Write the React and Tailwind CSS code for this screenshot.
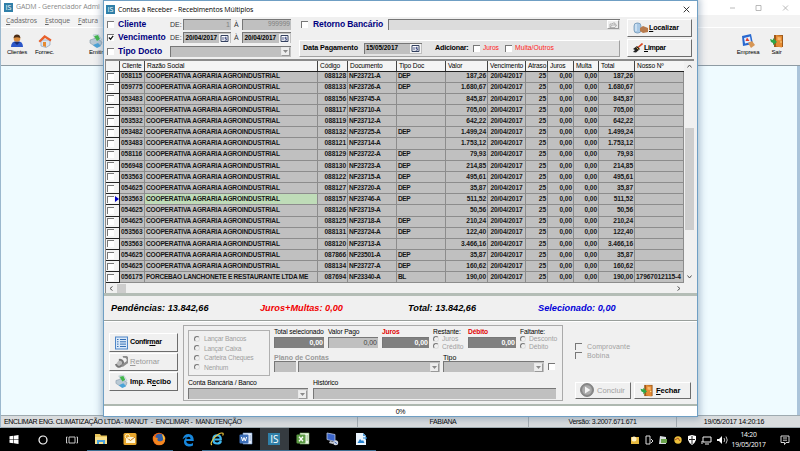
import React from "react";

const rows = [
  ["058115", "088128", "NF23721-A", "DEP", "187,26"],
  ["059775", "088133", "NF23726-A", "DEP", "1.680,67"],
  ["053483", "088156", "NF23745-A", "", "845,87"],
  ["053531", "088117", "NF23710-A", "", "705,00"],
  ["053532", "088119", "NF23712-A", "", "642,22"],
  ["053482", "088132", "NF23725-A", "DEP", "1.499,24"],
  ["053483", "088121", "NF23714-A", "", "1.753,12"],
  ["058116", "088129", "NF23722-A", "DEP", "79,93"],
  ["056948", "088130", "NF23723-A", "DEP", "214,85"],
  ["053563", "088122", "NF23715-A", "DEP", "495,61"],
  ["054625", "088127", "NF23720-A", "DEP", "35,87"],
  ["053563", "088157", "NF23746-A", "DEP", "511,52"],
  ["054625", "088126", "NF23719-A", "", "50,56"],
  ["054625", "088125", "NF23718-A", "DEP", "210,24"],
  ["053563", "088131", "NF23724-A", "DEP", "122,40"],
  ["053563", "088120", "NF23713-A", "", "3.466,16"],
  ["054625", "087866", "NF23501-A", "DEP", "35,87"],
  ["054625", "088134", "NF23727-A", "DEP", "160,62"],
  ["056175", "087694", "NF23340-A", "BL", "190,00"],
];

const COLS =
  "grid grid-cols-[14px_25px_173px_30px_49px_49px_42px_38px_22px_26px_25px_36px_49px]";

const Check = ({ on, className = "" }) => (
  <span className={`block h-[7px] w-[7px] shrink-0 border-l border-t border-[#777] ${className || "bg-white"}`}>
    {on && (
      <svg viewBox="0 0 7 7" className="block h-[6px] w-[6px]">
        <path d="M1 3 L3 5 L6 1" fill="none" stroke="#111" strokeWidth="1.5" />
      </svg>
    )}
  </span>
);

const Radio = () => (
  <span className="block h-[6px] w-[6px] shrink-0 rounded-full border border-[#e0e0e0] border-l-[#777] border-t-[#777] bg-[#f0f0f0]" />
);

const Field = ({ className = "", children }) => (
  <span
    className={`flex h-[11px] shrink-0 items-center justify-end border-l border-t border-[#777] pr-[1px] ${className}`}
  >
    {children}
  </span>
);

const Arrow = () => (
  <span className="flex h-[9px] w-[9px] items-center justify-center border border-[#e8e8e8] border-b-[#999] border-r-[#999] bg-[#ededed]">
    <svg viewBox="0 0 5 3" className="h-[3px] w-[5px]">
      <path d="M0 0H5L2.5 3Z" fill="#8a8a8a" />
    </svg>
  </span>
);

const Calendar = () => (
  <svg viewBox="0 0 11 9" className="h-[9px] w-[11px] shrink-0">
    <rect width="11" height="9" fill="#f4f4f4" />
    <path d="M2 1.5H9V7.5H2Z" fill="#fff" stroke="#33405f" />
    <path d="M4 3V6.3M7.6 3.3H6V4.6H7.4V6.2H5.6" fill="none" stroke="#1d2c6b" strokeWidth=".8" />
  </svg>
);

const Btn = ({ className = "", children }) => (
  <div
    className={`flex shrink-0 items-center whitespace-nowrap border border-b-[#6c6c6c] border-l-white border-r-[#6c6c6c] border-t-white bg-[#f0f0f0] text-[7.6px] font-bold ${className}`}
  >
    {children}
  </div>
);

const ISLogo = ({ className = "" }) => (
  <span
    className={`flex shrink-0 items-center justify-center bg-[#2f7fa8] font-['Open_Sans',sans-serif] leading-none text-white ${className}`}
  >
    IS
  </span>
);

const DoorIcon = ({ className = "" }) => (
  <svg viewBox="0 0 14 14" className={`shrink-0 ${className}`}>
    <path d="M4 1H13V13H4Z" fill="#9c5a1c" />
    <path d="M6 1L12 2V13.5L6 12.5Z" fill="#e58a32" />
    <path d="M7.5 3L10.8 3.6V6.5L7.5 6Z" fill="#f7b86c" />
    <circle cx="11" cy="8" r=".7" fill="#ffe9a0" />
    <path d="M0 5L3 6L3 4L7 8L3 11V9L1 8Z" fill="#2fa546" />
  </svg>
);

const PrintIcon = ({ className = "" }) => (
  <svg viewBox="0 0 14 14" className={`shrink-0 ${className}`}>
    <path d="M4 1L9 0L13 6L8 8Z" fill="#dfe9ee" stroke="#9fb4c0" strokeWidth=".5" />
    <path d="M1 6L7 4L13 8L12 11L7 13L1 9Z" fill="#b9c9d4" stroke="#71889a" strokeWidth=".5" />
    <path d="M5 2L9 1L11 5L8 7Z" fill="#42b649" />
    <path d="M4 11L9 9L12 12L8 14Z" fill="#4aa3d8" />
  </svg>
);

const Pointer = () => (
  <svg viewBox="0 0 4 6" className="h-[6px] w-[4px]">
    <path d="M0 0L4 3L0 6Z" fill="#0000c8" />
  </svg>
);

function MainWindow() {
  const tool = "flex flex-col items-center text-[6px] leading-[8px] text-black tracking-[-0.2px]";
  return (
    <div className="flex h-[428px] w-[800px] flex-col border-l border-[#9bb8ce] bg-[#f0f0f0]">
      <div className="flex h-[15px] shrink-0 items-center bg-white pl-[3px] font-['Open_Sans',sans-serif] text-[7px] text-[#888]">
        <ISLogo className="mr-[3px] h-[9px] w-[9px] text-[7px]" />
        <span className="w-[87px] shrink-0 overflow-hidden whitespace-nowrap tracking-[-0.1px]">GADM - Gerenciador Admi</span>
        <svg viewBox="0 0 60 8" className="ml-[626px] h-[8px] w-[60px] shrink-0">
          <path d="M1 4H6M27 1.5H32V6.5H27ZM54 1.5L59 6.5M59 1.5L54 6.5" fill="none" stroke="#a8a8a8" strokeWidth=".8" />
        </svg>
      </div>
      <div className="flex h-[13px] shrink-0 items-center border-b border-white bg-[#f3f3f3] pl-[5px] font-['Open_Sans',sans-serif] text-[6.9px] tracking-[-0.15px] text-[#666]">
        <span className="w-[39px]"><u>C</u>adastros</span>
        <span className="w-[33px]"><u>E</u>stoque</span>
        <span className="w-[25px] overflow-hidden"><u>F</u>atura</span>
      </div>
      <div className="flex h-[38px] shrink-0 items-start border-b border-[#8e9ba3] pt-[6px]">
        <div className={`${tool} ml-[2px] w-[28px]`}>
          <svg viewBox="0 0 14 14" className="h-[14px] w-[14px]">
            <path d="M1 13Q1 7 7 7Q13 7 13 13Z" fill="#2b56c8" />
            <path d="M4 8L7 11L10 8Z" fill="#1c2e70" />
            <circle cx="7" cy="4.5" r="3.3" fill="#d98c3f" />
            <path d="M3.6 4Q4 .6 7 .6Q10 .6 10.4 4Q7 2.6 3.6 4Z" fill="#4b2c16" />
          </svg>
          Clientes
        </div>
        <div className={`${tool} w-[27px]`}>
          <svg viewBox="0 0 14 14" className="h-[14px] w-[14px]">
            <path d="M3 6V12L8 13.5L12 11V6Z" fill="#dbe6f2" stroke="#7f95ae" strokeWidth=".6" />
            <path d="M.5 7L6.5 1L13.5 5.5L12.5 7.5L7 4L2 8.5Z" fill="#e8602b" />
            <path d="M5 8H8V13L5 12Z" fill="#e58a32" />
          </svg>
          Fornec.
        </div>
        <div className={`${tool} ml-[24px] w-[28px]`}>
          <PrintIcon className="h-[14px] w-[14px]" />
          Emitir
        </div>
        <div className={`${tool} ml-[623px] w-[30px]`}>
          <svg viewBox="0 0 14 14" className="h-[14px] w-[14px]">
            <path d="M1 2L10 0L12 10L2 12Z" fill="#2868d0" />
            <path d="M3 4L9 2.5L10 8L4 9.5Z" fill="#e5eefc" />
            <path d="M6 3.5L8.5 7H4.5Z" fill="#e03a28" />
            <path d="M7 9L11 7L14 11L10 14Z" fill="#d79655" />
          </svg>
          Empresa
        </div>
        <div className={`${tool} w-[27px]`}>
          <DoorIcon className="h-[14px] w-[14px]" />
          Sair
        </div>
      </div>
      <div className="flex-1 border-r-[3px] border-[#abc4da] bg-[#effbff]" />
      <div className="flex h-[13px] shrink-0 items-center whitespace-nowrap border-y border-[#9eaab0] bg-[#d9dcde] text-[7px] text-black">
        <span className="w-[357px] border-r border-[#a6adb2] pl-[3px] leading-[10px] tracking-[-0.38px]">
          ENCLIMAR ENG. CLIMATIZAÇÃO LTDA - MANUT&nbsp; -&nbsp; ENCLIMAR -&nbsp; MANUTENÇÃO
        </span>
        <span className="w-[171px] border-r border-[#a6adb2] text-center leading-[10px] tracking-[-0.4px]">FABIANA</span>
        <span className="w-[148px] border-r border-[#a6adb2] text-center leading-[10px] tracking-[-0.28px]">Versão: 3.2007.671.671</span>
        <span className="w-[114px] text-center leading-[10px] tracking-[-0.2px]">19/05/2017 14:20:16</span>
      </div>
    </div>
  );
}

function Filters() {
  const label = "whitespace-nowrap text-[8.5px] font-bold text-[#000080]";
  return (
    <div className="flex h-[42px] shrink-0 pt-[1.5px] text-[7px] leading-none">
      <div className="flex w-[195px] flex-col gap-[2.5px] pl-[3px]">
        <div className="flex h-[11px] items-center">
          <Check />
          <span className={`${label} ml-[4px] w-[52px]`}>Cliente</span>
          <span className="w-[13px] text-[#333]">DE:</span>
          <Field className="w-[48px] bg-[#c0c0c0] text-[#808080]">1</Field>
          <span className="ml-[3px] w-[8px] text-[#333]">À</span>
          <Field className="w-[49px] bg-[#c0c0c0] text-[6.6px] text-[#808080]">999999</Field>
        </div>
        <div className="flex h-[11px] items-center">
          <Check on />
          <span className={`${label} ml-[4px] w-[52px]`}>Vencimento</span>
          <span className="w-[13px] text-[#333]">DE:</span>
          <Field className="w-[48px] bg-[#c0c0c0] text-[6.4px] font-bold">
            <span className="mr-[2px] tracking-[-0.05px]">20/04/2017</span><Calendar />
          </Field>
          <span className="ml-[3px] w-[8px] text-[#333]">À</span>
          <Field className="w-[49px] bg-[#c0c0c0] text-[6.4px] font-bold">
            <span className="mr-[3px] tracking-[-0.05px]">20/04/2017</span><Calendar />
          </Field>
        </div>
        <div className="flex h-[11px] items-center">
          <Check />
          <span className={`${label} ml-[4px] w-[52px]`}>Tipo Docto</span>
          <Field className="w-[121px] bg-[#c0c0c0]"><Arrow /></Field>
        </div>
      </div>
      <div className="flex w-[321px] flex-col">
        <div className="flex h-[11px] items-center pl-[2px]">
          <Check />
          <span className={`${label} ml-[5px] w-[75px] tracking-[-0.08px]`}>Retorno Bancário</span>
          <Field className="w-[232px] bg-[#dcdcdc]">
            <span className="flex h-[9px] w-[12px] items-center justify-center border border-b-[#999] border-l-white border-r-[#999] border-t-white bg-[#eee]">
              <svg viewBox="0 0 8 6" className="h-[6px] w-[8px]">
                <path d="M1 5.5V2H3L4 1H6V3M1 5.5L3 3H7.6L6 5.5Z" fill="none" stroke="#999" strokeWidth=".7" />
              </svg>
            </span>
          </Field>
        </div>
        <div className="mt-[10px] flex h-[17px] items-center whitespace-nowrap border border-b-[#a0a0a0] border-l-white border-r-[#a0a0a0] border-t-white bg-[#e4e4e4] pl-[3px]">
          <span className="w-[61px] text-[7.2px] font-bold tracking-[-0.1px]">Data Pagamento</span>
          <Field className="w-[58px] bg-[#c0c0c0] text-[6.4px] font-bold">
            <span className="mr-[12px]">15/05/2017</span><Calendar />
          </Field>
          <span className="ml-[13px] w-[38px] text-[7.2px] font-bold tracking-[-0.2px]">Adicionar:</span>
          <Check />
          <span className="ml-[3px] w-[22px] text-[6.7px] tracking-[-0.1px] text-[#f22]">Juros</span>
          <Check />
          <span className="ml-[3px] text-[6.8px] text-[#f22]">Multa/Outros</span>
        </div>
      </div>
      <div className="flex flex-col gap-[2px] pl-[7px]">
        <Btn className="h-[18px] w-[65px]">
          <svg viewBox="0 0 15 12" className="ml-[5px] mr-[1px] h-[12px] w-[15px]">
            <rect x="1" y="1" width="7" height="10" rx="3" fill="#a8c8e4" stroke="#6a8fb0" strokeWidth=".7" />
            <path d="M3 2V9" stroke="#edf6ff" />
            <path d="M7 6L10 4L15 6V10L10 11L7 9Z" fill="#b77a4c" />
          </svg>
          <span className="text-[7.2px] tracking-[-0.15px]"><u>L</u>ocalizar</span>
        </Btn>
        <Btn className="h-[18px] w-[65px]">
          <svg viewBox="0 0 10 10" className="ml-[5px] mr-[1px] h-[10px] w-[10px]">
            <path d="M9.5 .5L5 4.5" stroke="#d8441f" strokeWidth="1.6" />
            <path d="M4 3L7 6L3 9.5L0 9L2 7L0 6Z" fill="#222" />
            <path d="M3.5 4.5L5.5 6.5" stroke="#efb43c" />
          </svg>
          <span className="text-[7.2px] tracking-[-0.4px]"><u>L</u>impar</span>
        </Btn>
      </div>
    </div>
  );
}

function Grid() {
  const head = "overflow-hidden whitespace-nowrap border-r border-[#444] pl-[2px]";
  const cell = "flex items-center overflow-hidden whitespace-nowrap border-b border-r border-[#8c8c8c] px-[1px]";
  return (
    <div className="ml-[1px] flex h-[234px] w-[589px] shrink-0 flex-col border-l border-t-2 border-[#8a8a8a] bg-[#f0f0f0]">
      <div className="flex h-[222px]">
        <div className="w-[578px] overflow-hidden">
          <div className={`${COLS} h-[10.5px] border-b border-[#222] bg-[#f4f4f4] text-[6.6px] leading-[10px] tracking-[-0.13px]`}>
            {["", "Cliente", "Razão Social", "Código", "Documento", "Tipo Doc", "Valor", "Vencimento", "Atraso", "Juros", "Multa", "Total"].map((h, i) => (
              <span key={i} className={head}>{h}</span>
            ))}
            <span className="pl-[2px]">Nosso Nº</span>
          </div>
          {rows.map(([cli, cod, doc, tipo, val], i) => (
            <div key={i} className={`${COLS} h-[11.17px] bg-[#c0c0c0] text-[6.6px] font-bold leading-none tracking-[-0.08px] text-[#161616]`}>
              <span className="flex items-center justify-between border-b border-r border-[#222] bg-[#f4f4f4] pl-[1px]">
                <Check />
                {i === 11 && <Pointer />}
              </span>
              <span className={cell}>{cli}</span>
              <span className={`${cell} ${i === 11 ? "bg-[#bfdcb8]" : ""} ${i === 18 ? "tracking-[-0.28px]" : "tracking-[-0.2px]"}`}>
                {i === 18 ? "PORCEBAO LANCHONETE E RESTAURANTE LTDA ME" : "COOPERATIVA AGRARIA AGROINDUSTRIAL"}
              </span>
              <span className={`${cell} justify-end`}>{cod}</span>
              <span className={`${cell} tracking-[-0.28px]`}>{doc}</span>
              <span className={`${cell} tracking-[-0.5px]`}>{tipo}</span>
              <span className={`${cell} justify-end`}>{val}</span>
              <span className={`${cell} justify-center`}>20/04/2017</span>
              <span className={`${cell} justify-end`}>25</span>
              <span className={`${cell} justify-end`}>0,00</span>
              <span className={`${cell} justify-end`}>0,00</span>
              <span className={`${cell} justify-end`}>{val}</span>
              <span className={cell}>{i === 18 ? "17967012115-4" : ""}</span>
            </div>
          ))}
        </div>
        <div className="flex w-[10px] flex-col items-center bg-[#f0f0f0] pt-[3px]">
          <svg viewBox="0 0 5 4" className="h-[4px] w-[5px] shrink-0"><path d="M.5 3.5L2.5 1L4.5 3.5" fill="none" stroke="#555" /></svg>
          <span className="mt-[60px] h-[102px] w-[9px] shrink-0 bg-[#cdcdcd]" />
          <svg viewBox="0 0 5 4" className="mt-[45px] h-[4px] w-[5px] shrink-0"><path d="M.5 .5L2.5 3L4.5 .5" fill="none" stroke="#555" /></svg>
        </div>
      </div>
      <div className="flex h-[10px] items-center bg-[#f0f0f0] pl-[3px]">
        <svg viewBox="0 0 4 5" className="h-[5px] w-[4px]"><path d="M3.5 .5L1 2.5L3.5 4.5" fill="none" stroke="#555" /></svg>
        <span className="ml-[4px] h-[9px] w-[9px] bg-[#cdcdcd]" />
        <svg viewBox="0 0 4 5" className="ml-[551px] h-[5px] w-[4px]"><path d="M.5 .5L3 2.5L.5 4.5" fill="none" stroke="#555" /></svg>
      </div>
    </div>
  );
}

function Totals() {
  return (
    <div className="flex h-[28px] shrink-0 items-center whitespace-nowrap border-b border-t-[3px] border-b-[#999f9b] border-t-[#b4bdb6] pl-[7px] pt-[1.5px] text-[9.2px] font-bold italic">
      <span className="w-[149px]">Pendências: 13.842,66</span>
      <span className="w-[148px] text-[#f00000]">Juros+Multas: 0,00</span>
      <span className="w-[130px]">Total: 13.842,66</span>
      <span className="text-[#0000d8]">Selecionado: 0,00</span>
    </div>
  );
}

const Amount = ({ title, w, red, light }) => (
  <div className={`flex shrink-0 flex-col ${w}`}>
    <span className={`h-[8px] whitespace-nowrap text-[6.7px] leading-[8px] tracking-[-0.12px] ${red ? "font-bold text-[#e00000]" : ""}`}>{title}</span>
    <Field className={`mr-[4px] mt-[1px] text-[7px] ${light ? "bg-[#c0c0c0] text-[#444]" : "bg-[#808080] font-bold text-white"}`}>0,00</Field>
  </div>
);

const RadioPair = ({ title, a, b, w }) => (
  <div className={`flex shrink-0 flex-col whitespace-nowrap text-[6.7px] ${w}`}>
    <span className="h-[7px] leading-[7px] tracking-[-0.1px]">{title}</span>
    <span className="flex h-[7.5px] items-center gap-[3px] leading-[7px] text-[#a0a0a0]"><Radio />{a}</span>
    <span className="flex h-[7.5px] items-center gap-[3px] leading-[7px] text-[#a0a0a0]"><Radio />{b}</span>
  </div>
);

function Bottom() {
  return (
    <div className="flex h-[83px] shrink-0 border-t border-white">
      <div className="flex w-[79px] flex-col gap-[1px] pl-[5px] pt-[11px]">
        <Btn className="h-[19px] w-[69px]">
          <svg viewBox="0 0 13 13" className="ml-[5px] mr-[2px] h-[14px] w-[13px]">
            <rect width="13" height="13" fill="#4f86c8" />
            <path d="M1 1H12V12H1Z" fill="#dbe9f8" />
            <path d="M2 3H3.5M2 5.3H3.5M2 7.6H3.5M2 10H3.5M5 3H11M5 5.3H11M5 7.6H11M5 10H11" stroke="#356fb5" strokeWidth="1" />
          </svg>
          <span className="text-[7.2px] tracking-[-0.3px]">Confir<u>m</u>ar</span>
        </Btn>
        <Btn className="h-[18px] w-[69px] text-[#999]">
          <svg viewBox="0 0 13 13" className="ml-[5px] mr-[2px] h-[13px] w-[13px]">
            <path d="M4 4A3 3 0 1 1 6 10A3 3 0 0 1 1 8" fill="#bbb" stroke="#777" strokeWidth="2" />
            <path d="M8 1A3 3 0 0 1 11 7L7 10" fill="none" stroke="#8c8c8c" strokeWidth="2.4" />
          </svg>
          <span className="font-normal"><u>R</u>etornar</span>
        </Btn>
        <Btn className="h-[19px] w-[69px]">
          <PrintIcon className="ml-[5px] mr-[2px] h-[13px] w-[13px]" />
          <span className="text-[7.4px] tracking-[-0.1px]">Imp. R<u>e</u>cibo</span>
        </Btn>
      </div>
      <div className="mt-[3px] flex h-[76px] w-[380px] shrink-0 flex-col border border-[#aaa] pl-[4px] pt-[4px]">
        <div className="flex h-[46px]">
          <div className="flex h-[46px] w-[82px] shrink-0 flex-col justify-center gap-[2.4px] border border-[#b0b0b0] pl-[5px] text-[6.7px] leading-[7px] tracking-[-0.18px] text-[#a0a0a0]">
            {["Lançar Bancos", "Lançar Caixa", "Carteira Cheques", "Nenhum"].map((t) => (
              <span key={t} className="flex items-center gap-[4px] whitespace-nowrap"><Radio />{t}</span>
            ))}
          </div>
          <div className="flex flex-col pl-[4px]">
            <div className="-mt-[2px] flex h-[26px]">
              <Amount title="Total selecionado" w="w-[54px]" />
              <Amount title="Valor Pago" w="w-[54px]" light />
              <Amount title="Juros" w="w-[51px]" red />
              <RadioPair title="Restante:" a="Juros" b="Crédito" w="w-[35px]" />
              <Amount title="Débito" w="w-[52px]" red />
              <RadioPair title="Faltante:" a="Desconto" b="Débito" w="w-[40px]" />
            </div>
            <div className="flex h-[7px] text-[7px] leading-[7px]">
              <span className="w-[169px] whitespace-nowrap font-bold text-[#999]">Plano de Contas</span>
              <span>Tipo</span>
            </div>
            <div className="flex items-center">
              <Field className="mr-[2px] w-[22px] bg-[#c0c0c0]" />
              <Field className="mr-[3px] w-[142px] bg-[#c0c0c0]"><Arrow /></Field>
              <Field className="mr-[4px] w-[101px] bg-[#c0c0c0]"><Arrow /></Field>
              <Check />
            </div>
          </div>
        </div>
        <div className="mt-[3px] flex h-[8px] text-[6.8px] leading-[8px] tracking-[-0.14px]">
          <span className="w-[125px]">Conta Bancária / Banco</span>
          <span>Histórico</span>
        </div>
        <div className="mt-[1px] flex">
          <Field className="mr-[5px] w-[120px] bg-[#c0c0c0]"><Arrow /></Field>
          <Field className="w-[243px] bg-[#c0c0c0]" />
        </div>
      </div>
      <div className="flex flex-col pl-[12px] pt-[20.5px] text-[7px] leading-[7px] text-[#a0a0a0]">
        <div className="mb-[2.5px] flex items-center gap-[5px] tracking-[0.1px]"><Check className="bg-[#f0f0f0]" />Comprovante</div>
        <div className="flex items-center gap-[5px] tracking-[0.1px]"><Check className="bg-[#f0f0f0]" />Bobina</div>
        <div className="mt-[22.5px] flex gap-[3px]">
          <Btn className="h-[17px] w-[56px]">
            <svg viewBox="0 0 14 14" className="ml-[4px] mr-[3px] h-[14px] w-[14px]">
              <circle cx="7" cy="7" r="6.5" fill="#8b8b8b" stroke="#6a6a6a" strokeWidth=".7" />
              <circle cx="7" cy="7" r="4.8" fill="#ababab" />
              <path d="M5 3.6L10.4 7L5 10.4Z" fill="#f4f4f4" />
            </svg>
            <span className="font-normal">Concluir</span>
          </Btn>
          <Btn className="h-[17px] w-[57px] text-black">
            <DoorIcon className="ml-[5px] mr-[2px] h-[13px] w-[14px]" />
            <span className="tracking-[-0.1px]"><u>F</u>echar</span>
          </Btn>
        </div>
      </div>
    </div>
  );
}

function Dialog() {
  return (
    <div className="absolute left-[103px] top-0 flex h-[417px] w-[595px] flex-col border border-[#6f9fc4] bg-[#f0f0f0] text-black shadow-[0_0_7px_2px_rgba(90,120,150,0.45)]">
      <div className="flex h-[16px] shrink-0 items-center bg-white pl-[2px] font-['Open_Sans',sans-serif] text-[7px] leading-none">
        <ISLogo className="mr-[3px] h-[9px] w-[9px] text-[7px]" />
        <span className="w-[565px] whitespace-nowrap tracking-[-0.14px]">Contas à Receber - Recebimentos Múltiplos</span>
        <svg viewBox="0 0 7 7" className="h-[7px] w-[7px] shrink-0"><path d="M.7 .7L6.3 6.3M6.3 .7L.7 6.3" stroke="#222" strokeWidth=".9" /></svg>
      </div>
      <Filters />
      <Grid />
      <Totals />
      <Bottom />
      <div className="flex-1 border-t-[2px] border-[#aeb8b0] bg-white pt-[1px] text-center text-[7px] leading-[9px] tracking-[-0.4px]">0%</div>
    </div>
  );
}

function Taskbar() {
  const slot = "flex h-[23px] w-[28.9px] shrink-0 items-center justify-center";
  const line = "border-b border-[#3f6f93]";
  const ic = "h-[14px] w-[14px]";
  return (
    <div className="flex h-[23px] w-[800px] items-center bg-black text-white">
      <span className={slot}>
        <svg viewBox="0 0 10 10" className="h-[9px] w-[10px]"><path d="M0 1.4L4.4 .8V4.6H0ZM5 .7L10 0V4.6H5ZM0 5.2H4.4V9.2L0 8.6ZM5 5.2H10V10L5 9.3Z" fill="#fff" /></svg>
      </span>
      <span className={slot}>
        <svg viewBox="0 0 10 10" className="h-[10px] w-[10px]"><circle cx="5" cy="5" r="4" fill="none" stroke="#fff" strokeWidth="1.2" /></svg>
      </span>
      <span className={slot}>
        <svg viewBox="0 0 12 8" className="h-[8px] w-[12px]"><path d="M3 1H9V7H3ZM1.5 1H.5V7H1.5M10.5 1H11.5V7H10.5" fill="none" stroke="#ddd" strokeWidth=".9" /></svg>
      </span>
      <span className={`${slot} ${line}`}>
        <svg viewBox="0 0 14 14" className={ic}><path d="M1 2H6L7 3.5H13V12H1Z" fill="#e9c55b" /><path d="M1 5H13V12H1Z" fill="#f8e08b" /><path d="M3 12V8H11V12H9V10H5V12Z" fill="#4ba2dc" /></svg>
      </span>
      <span className={`${slot} ${line}`}>
        <svg viewBox="0 0 14 14" className={ic}><rect x=".5" y="1" width="13" height="12" rx="1.5" fill="#e8a72d" /><path d="M3 5H12V11H3Z" fill="#fff6d5" /><path d="M3 5L7.5 8.5L12 5" fill="none" stroke="#c87b18" /><circle cx="4.5" cy="4.5" r="2.2" fill="none" stroke="#fff0b8" /></svg>
      </span>
      <span className={`${slot} ${line}`}>
        <svg viewBox="0 0 14 14" className={ic}><circle cx="7" cy="7" r="6.3" fill="#e8641b" /><circle cx="7.6" cy="5.8" r="4" fill="#315fa8" /><path d="M1 4Q3 6 6 6Q4 9 8 9.5Q11 9.5 12.5 5Q14.5 11 9 13Q1 13.5 1 4Z" fill="#f4871f" /><path d="M10 2Q13 4 13 7L11.5 8Z" fill="#f8c93a" /></svg>
      </span>
      <span className={slot}>
        <svg viewBox="0 0 14 14" className={ic}><path d="M1.5 6.2Q3 1 7.4 1Q12.8 1 12.8 8H5.2Q5.5 11 8.8 11Q10.7 11 12 10V12.4Q10 13.5 7.7 13.4Q2.5 13 3 8Q3.5 5 6.5 4Q3.7 4.2 1.5 6.2ZM5.3 6H9.6Q9.4 3.8 7.6 3.8Q5.8 4 5.3 6Z" fill="#1787dc" /></svg>
      </span>
      <span className={`${slot} ${line}`}>
        <svg viewBox="0 0 14 14" className={ic}><path d="M11 9Q10 11.5 7.3 11.5Q3.3 11.5 3.3 7.4Q3.3 3.4 7.2 3.4Q11 3.4 10.8 7.5H4.5" fill="none" stroke="#3fb7ee" strokeWidth="2.2" /><path d="M2 13Q-.5 12 4 6Q10 0 13 1.3Q13.5 2 12.6 3.6" fill="none" stroke="#f0c83c" strokeWidth="1.1" /></svg>
      </span>
      <span className={`${slot} ${line}`}>
        <svg viewBox="0 0 14 14" className={ic}><path d="M4 1H13V12H4Z" fill="#e8effa" stroke="#6d93cc" strokeWidth=".6" /><rect x=".5" y="2.5" width="9" height="9" rx="1" fill="#3d6fb8" /><path d="M2.4 5L3.7 9L5 5.5L6.3 9L7.6 5" fill="none" stroke="#fff" /><path d="M10.5 4H12M10.5 6H12M10.5 8H12" stroke="#5a82bd" strokeWidth=".7" /></svg>
      </span>
      <span className={`${slot} ${line} bg-[#353b40]`}><ISLogo className="h-[12px] w-[12px] text-[10px]" /></span>
      <span className={`${slot} ${line}`}>
        <svg viewBox="0 0 14 14" className={ic}><path d="M4 1H13V12H4Z" fill="#eef7e9" stroke="#72a75a" strokeWidth=".6" /><rect x=".5" y="2.5" width="9" height="9" rx="1" fill="#5d9c45" /><path d="M3 4.7L7 9.3M7 4.7L3 9.3" stroke="#fff" strokeWidth="1.3" /><path d="M10.5 4H12M10.5 6H12M10.5 8H12" stroke="#68a350" strokeWidth=".8" /></svg>
      </span>
      <span className={`${slot} ${line}`}>
        <svg viewBox="0 0 14 14" className={ic}><path d="M2 1L10 2.5V9.5L2 7.5Z" fill="#3c66cc" stroke="#b8c6e2" strokeWidth=".8" /><path d="M5 9L9 10L8 12L4 11Z" fill="#c5c9d1" /><circle cx="10.7" cy="10.7" r="2.5" fill="#cfd6e4" /><path d="M9.5 10L11.8 11.5" stroke="#355fb0" /></svg>
      </span>
      <span className={`${slot} ${line}`}>
        <svg viewBox="0 0 14 14" className={ic}><path d="M2 1H9L12 4V13H2Z" fill="#e9f3fc" /><path d="M9 1V4H12Z" fill="#4a9bdb" /><path d="M3.5 11L6 7L8 9L9 8L10.5 11Z" fill="#2581ce" /><path d="M9 6H12.5M11 4.5L12.7 6L11 7.5" fill="none" stroke="#2581ce" /></svg>
      </span>
      <svg viewBox="0 0 100 12" className="ml-[253px] h-[12px] w-[100px] shrink-0">
        <path d="M2 3H10V10H2Z" fill="#e6b93e" /><circle cx="5" cy="5" r="2.5" fill="#fff1c4" />
        <path d="M17 2H21V10H17ZM22 5L24 7L22 9" fill="none" stroke="#ddd" />
        <path d="M31 2L37 3V10H30Z" fill="#d8dde0" /><path d="M32 5H38V9H32Z" fill="#6aa34c" />
        <circle cx="49" cy="6" r="3.7" fill="#edc13a" /><path d="M46 6L49 4L51 7" stroke="#ad4c27" fill="none" />
        <path d="M59 2L63 1L67 2V6Q66 9 63 11Q60 9 59 6Z" fill="#fff" /><path d="M63 2V10M60 5.5H66" stroke="#222" />
        <path d="M74 3H82V8H74ZM76 10H80M73 7V10" fill="none" stroke="#eee" />
        <path d="M88 5H90L93 2V10L90 7H88Z" fill="#fff" /><path d="M95 4Q96.5 6 95 8M97 2.5Q99.5 6 97 9.5" fill="none" stroke="#eee" strokeWidth=".8" />
      </svg>
      <span className="ml-[3px] flex w-[34px] shrink-0 flex-col items-center whitespace-nowrap font-['Open_Sans',sans-serif] text-[6.8px] leading-[10px] tracking-[-0.2px]">
        <span>14:20</span>
        <span>19/05/2017</span>
      </span>
      <svg viewBox="0 0 10 10" className="ml-[14px] h-[10px] w-[10px] shrink-0"><path d="M1 1H9V7.5H6L4.5 9.5V7.5H1ZM3 3H7M3 5.2H7" fill="none" stroke="#eee" strokeWidth=".9" /></svg>
    </div>
  );
}

export default function App() {
  return (
    <div className="relative h-[451px] w-[800px] overflow-hidden bg-black font-['Liberation_Sans',Arial,sans-serif]">
      <MainWindow />
      <Dialog />
      <Taskbar />
    </div>
  );
}
